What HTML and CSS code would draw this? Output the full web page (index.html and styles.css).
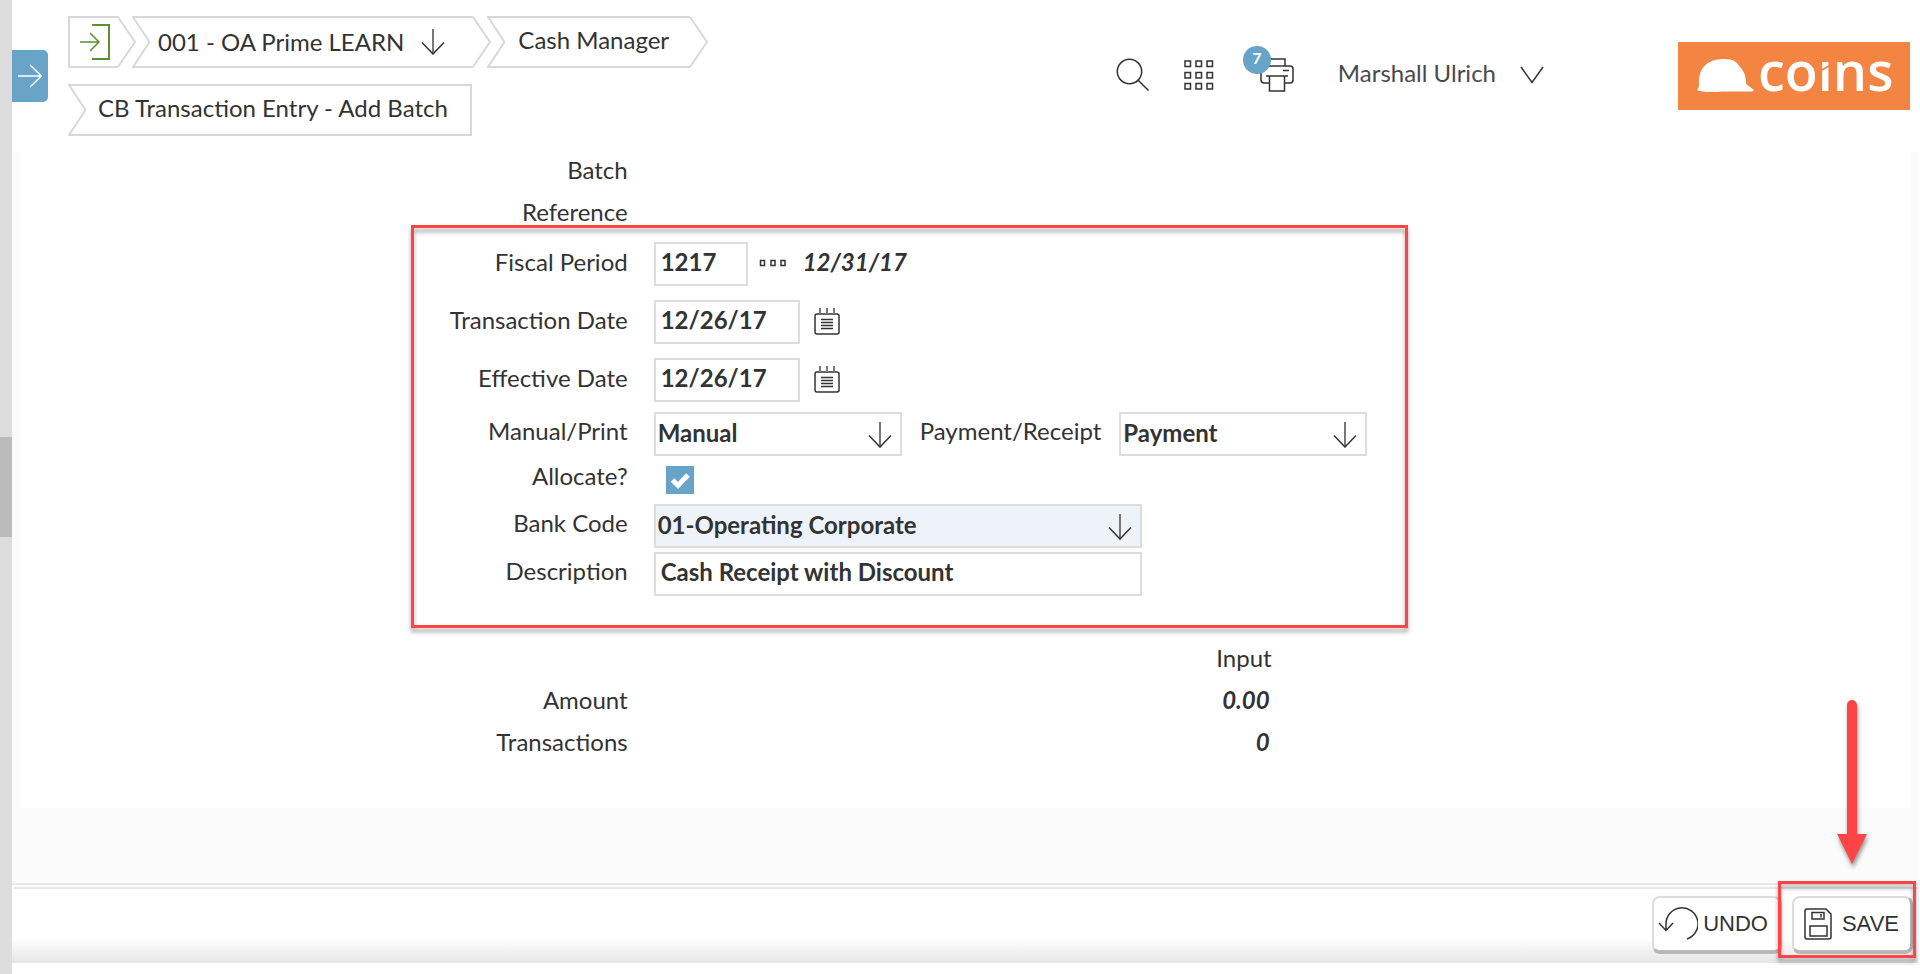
FILE: index.html
```html
<!DOCTYPE html>
<html lang="en">
<head>
<meta charset="utf-8">
<title>CB Transaction Entry - Add Batch</title>
<link rel="stylesheet" href="styles.css">
</head>
<body>
<svg class="symbols" aria-hidden="true">
  <symbol id="notch" viewBox="0 0 18 52"><path d="M18 1H1L17.500 26L1 51H18"/></symbol>
  <symbol id="point" viewBox="0 0 18 52"><path d="M0 1L17 26L0 51"/></symbol>
  <symbol id="arrow-down" viewBox="0 0 24 26"><path d="M12 0V25" stroke-width="2" stroke="#777"/><path d="M1 13.500L12 25L23 13.500"/></symbol>
  <symbol id="calendar" viewBox="0 0 26 28"><rect x="1" y="6" width="24" height="20" rx="2"/><path d="M6 0V6M13 0V6M20 0V6" stroke="#777" stroke-width="2"/><path d="M7 11.500H19M7 14.500H19M7 17.500H19M7 20.500H19"/></symbol>
</svg>
<div class="rail"><div class="rail-thumb"></div></div>
<div class="shell">
  <header class="header">
    <button class="side-tab" aria-label="Open menu"><svg width="24" height="24" viewBox="0 0 24 24"><path d="M0 12H23M12 1L23.500 12L12 23"/></svg></button>
    <nav class="crumbs" aria-label="Breadcrumb">
      <div class="crumb-row">
        <button class="crumb" aria-label="Exit">
          <span class="crumb-body crumb-exit"><svg width="30" height="36" viewBox="0 0 30 36"><path d="M12 1H29V35H12" stroke-width="2"/><path d="M0 18H19M10 9L19 18L10 27"/></svg></span>
          <svg class="crumb-end"><use href="#point"/></svg>
        </button>
        <button class="crumb">
          <svg class="crumb-end"><use href="#notch"/></svg>
          <span class="crumb-body crumb-company">001 - OA Prime LEARN <svg class="arrow"><use href="#arrow-down"/></svg></span>
          <svg class="crumb-end"><use href="#point"/></svg>
        </button>
        <button class="crumb">
          <svg class="crumb-end"><use href="#notch"/></svg>
          <span class="crumb-body crumb-module">Cash Manager</span>
          <svg class="crumb-end"><use href="#point"/></svg>
        </button>
      </div>
      <div class="crumb-row">
        <button class="crumb">
          <svg class="crumb-end"><use href="#notch"/></svg>
          <span class="crumb-body crumb-page">CB Transaction Entry - Add Batch</span>
        </button>
      </div>
    </nav>
    <div class="tools">
      <button class="tool" aria-label="Search"><svg width="34" height="34" viewBox="0 0 34 34"><circle cx="13.500" cy="13.500" r="12.200"/><path d="M22 22L32.500 32.500"/></svg></button>
      <button class="tool" aria-label="Apps"><svg width="30" height="30" viewBox="0 0 30 30"><path d="M1 1h5.500v5.500H1zM12 1h5.500v5.500H12zM23 1h5.500v5.500H23zM1 12.500h5.500V18H1zM12 12.500h5.500V18H12zM23 12.500h5.500V18H23zM1 23.500h5.500V29H1zM12 23.500h5.500V29H12zM23 23.500h5.500V29H23z"/></svg></button>
      <button class="tool tool-print" aria-label="Print queue"><svg width="34" height="34" viewBox="0 0 34 34"><path d="M9 8V1H25V8M9 25H4Q1 25 1 22V11Q1 8 4 8H30Q33 8 33 11V22Q33 25 30 25H25M6 18H28M23 12.500H29M9.500 18V33H24.500V18"/></svg><span class="badge">7</span></button>
      <button class="user"><span class="user-name">Marshall Ulrich</span><svg width="24" height="18" viewBox="0 0 24 18"><path d="M1 1L12 16.500L23 1"/></svg></button>
    </div>
    <a class="logo" href="#" aria-label="coins">
      <svg width="232" height="68" viewBox="0 0 232 68">
        <path class="helmet" d="M19 48Q21 46 21 43C20 25 30 17 46 17C56 17 59 20 62 25C66 29 68 34 68 42L76 48Q75 50 72 49.500H44Q26 51 19 48Z"/>
        <text x="80" y="49">coins</text>
        <path class="dot-cover" d="M141 2H156V18H141Z"/>
        <path class="slice" d="M144 28L156 21"/>
      </svg>
    </a>
  </header>
  <main class="content">
    <form class="panel" id="batch-form">
      <div class="sheet">
        <div class="plain-row"><span class="label">Batch</span></div>
        <div class="plain-row"><span class="label">Reference</span></div>
        <section class="fields">
          <div class="row spaced">
            <label class="label" for="period">Fiscal Period</label>
            <input class="field w-period" id="period" value="1217">
            <button type="button" class="icon-button lookup" aria-label="Look up period"><svg width="28" height="8" viewBox="0 0 28 8"><path d="M1.500 1.500h4v5h-4zM12 1.500h4v5h-4zM22 1.500h4v5h-4z"/></svg></button>
            <output class="value">12/31/17</output>
          </div>
          <div class="row spaced">
            <label class="label" for="tdate">Transaction Date</label>
            <input class="field w-date" id="tdate" value="12/26/17">
            <button type="button" class="icon-button" aria-label="Pick transaction date"><svg class="calendar"><use href="#calendar"/></svg></button>
          </div>
          <div class="row">
            <label class="label" for="edate">Effective Date</label>
            <input class="field w-date" id="edate" value="12/26/17">
            <button type="button" class="icon-button" aria-label="Pick effective date"><svg class="calendar"><use href="#calendar"/></svg></button>
          </div>
          <div class="row tight after-dates">
            <label class="label" for="mode">Manual/Print</label>
            <span class="select w-select"><select class="field" id="mode"><option>Manual</option></select><svg class="arrow"><use href="#arrow-down"/></svg></span>
            <label class="inline-label" for="kind">Payment/Receipt</label>
            <span class="select w-select"><select class="field" id="kind"><option>Payment</option></select><svg class="arrow"><use href="#arrow-down"/></svg></span>
          </div>
          <div class="row check-row">
            <label class="label" for="allocate">Allocate?</label>
            <span class="check"><input type="checkbox" id="allocate" checked><svg width="28" height="28" viewBox="0 0 28 28"><path d="M6.500 14L12 19.500L22 9"/></svg></span>
          </div>
          <div class="row tight">
            <label class="label" for="bank">Bank Code</label>
            <span class="select w-wide"><select class="field tinted" id="bank"><option>01-Operating Corporate</option></select><svg class="arrow"><use href="#arrow-down"/></svg></span>
          </div>
          <div class="row tight last">
            <label class="label" for="desc">Description</label>
            <input class="field w-wide" id="desc" value="Cash Receipt with Discount">
          </div>
        </section>
        <table class="totals">
          <tr><td></td><th scope="col">Input</th></tr>
          <tr><th scope="row">Amount</th><td>0.00</td></tr>
          <tr><th scope="row">Transactions</th><td>0</td></tr>
        </table>
      </div>
    </form>
  </main>
  <footer class="footer">
    <div class="actions">
      <button class="action undo" type="reset" form="batch-form"><svg width="40" height="34" viewBox="0 0 40 34"><path d="M8 23V17A16 16 0 1 1 29 32M1 16L8 23.500L15 16"/></svg>UNDO</button>
      <div class="save-spot">
        <button class="action save" type="submit" form="batch-form"><svg width="28" height="32" viewBox="0 0 28 32"><path d="M3 1H22L27 6V29Q27 31 25 31H3Q1 31 1 29V3Q1 1 3 1ZM8 4.500H20V11H8ZM17 6V9.500M6 18H23V28H6Z"/></svg>SAVE</button>
        <svg class="pointer" width="30" height="164" viewBox="0 0 30 164" aria-hidden="true"><path d="M10 5A5 5 0 0 1 20 5V134H30L15 164L0 134H10Z"/></svg>
      </div>
    </div>
  </footer>
</div>
</body>
</html>
```
FILE: styles.css
```css
* { box-sizing: border-box; }
body {
  margin: 0;
  min-height: 100vh;
  display: flex;
  background: #fff;
  color: #333;
  font: 24px/36px Lato, "Liberation Sans", sans-serif;
}
button, input, select { font: inherit; color: inherit; margin: 0; }
button { background: none; border: 0; padding: 0; cursor: pointer; }
svg { display: block; flex: none; fill: none; stroke: #333; stroke-width: 1.5; }
.symbols { position: absolute; width: 0; height: 0; }

.rail { width: 12px; background: #ddd; display: flex; flex-direction: column; justify-content: center; }
.rail-thumb { height: 100px; background: #bbb; }
.shell { flex: 1; min-width: 0; display: flex; flex-direction: column; padding: 0 2px 11px 0; }

.header { display: flex; align-items: flex-start; padding: 0 8px 16px 0; min-height: 152px; }
.side-tab {
  width: 36px; height: 52px; margin: 50px 20px 0 0;
  display: grid; place-items: center;
  background: #68a3c8; border-radius: 0 5px 5px 0;
}
.side-tab svg { stroke: #fff; }
.crumbs { flex: 1; display: flex; flex-direction: column; gap: 16px; padding-top: 16px; }
.crumb-row { display: flex; }
.crumb { display: flex; height: 52px; white-space: nowrap; }
.crumb + .crumb { margin-left: -4px; }
.crumb-end { width: 18px; height: 52px; stroke: #d8d8d8; stroke-width: 2; }
.crumb-body { display: flex; align-items: center; border: solid #d8d8d8; border-width: 2px 0; padding-bottom: 4px; }
.crumb-exit { border-left-width: 2px; padding: 0 8px 0 10px; }
.crumb-exit svg { stroke: #5b8f31; }
.crumb-company { gap: 17px; padding: 0 28px 0 8px; }
.crumb-module { padding-left: 13px; padding-right: 21px; }
.crumb-page { border-right-width: 2px; padding-left: 12px; padding-right: 22px; }
.arrow { width: 24px; height: 26px; }

.tools { display: flex; align-items: center; padding-top: 58px; }
.tool { margin-right: 34px; }
.tool-print { position: relative; margin: 0 44px 0 12px; }
.badge {
  position: absolute; left: -17px; top: -12px;
  width: 28px; height: 28px; border-radius: 50%;
  background: #68a3c8; color: #fff; font-size: 16px; line-height: 24px; font-weight: bold;
}
.user { display: flex; align-items: center; gap: 24px; line-height: 30px; color: #4a4a4a; white-space: nowrap; }
.user-name { padding-bottom: 4px; }
.logo { margin: 42px 0 0 134px; background: #f38441; }
.logo svg { overflow: visible; stroke: none; }
.logo text { font: 600 54px "Open Sans", sans-serif; fill: #fff; }
.helmet { fill: #fff; }
.dot-cover { fill: #f38441; }
.slice { stroke: #f38441; stroke-width: 2; }

.content { flex: 1; background: #fbfbfb; padding: 0 8px 75px; }
.panel { background: #fff; display: grid; grid-template-columns: 7fr 997px 9fr; padding-bottom: 41px; }
.sheet { grid-column: 2; }
.label { width: 217px; text-align: right; margin-right: 26px; flex: none; }
.plain-row { display: flex; height: 42px; }
.fields { position: relative; padding: 6px 0 32px; }
.fields::after, .save-spot::after {
  content: ""; position: absolute; pointer-events: none;
  border: 3px solid #fe4444;
  filter: drop-shadow(0 4px 2px rgba(0, 0, 0, .35));
}
.fields::after { inset: -11px 0 0; }
.row { display: flex; line-height: 40px; }
.tight { line-height: 38px; }
.spaced { margin-bottom: 14px; }
.after-dates { margin-top: 10px; }
.check-row { height: 48px; }
.last { margin-top: 4px; }
.field {
  height: 44px; border: 2px solid #ddd; border-radius: 0; background: #fff;
  padding: 0 5px 6px; font-weight: bold; outline: 0;
}
select.field { appearance: none; width: 100%; padding: 0 40px 6px 2px; }
select.tinted { background: #eef3fa; }
.w-period { width: 94px; }
.w-date { width: 146px; }
.w-select { width: 248px; }
.w-wide { width: 488px; }
.select { position: relative; display: block; height: 44px; }
.select .arrow { position: absolute; right: 10px; top: 10px; pointer-events: none; }
.icon-button { height: 44px; margin-left: 14px; display: grid; place-items: center; }
.lookup { margin-left: 11px; margin-right: 16px; height: 42px; }
.calendar { width: 26px; height: 28px; }
.value { font-weight: bold; font-style: italic; }
.inline-label { margin: 0 18px; }
.check { position: relative; margin: 10px 0 0 12px; width: 28px; height: 28px; }
.check input { appearance: none; display: block; width: 28px; height: 28px; background: #68a3c8; }
.check svg { position: absolute; inset: 0; stroke: #fff; stroke-width: 5; pointer-events: none; }

.totals { width: 861px; margin-top: 13px; border-collapse: collapse; line-height: 34px; }
.totals tr { height: 42px; vertical-align: top; }
.totals th { font-weight: normal; text-align: right; padding: 0; }
.totals th[scope="row"] { width: 217px; }
.totals td { padding: 0 2px 0 0; text-align: right; font-weight: bold; font-style: italic; }

.footer { border-top: 2px solid #e8e8e8; padding-top: 4px; height: 80px; background: linear-gradient(#fff 54px, #e5e5e5); }
.actions { display: flex; justify-content: flex-end; gap: 10px; border-top: 2px solid #e8e8e8; margin: -2px 0 0 2px; padding: 7px 5px 0 0; }
.action {
  height: 58px; display: flex; align-items: center;
  font: 22px/28px "Liberation Sans", Arial, sans-serif;
  background: #fff; border: 2px solid #ddd; border-width: 2px 3px 4px 2px;
  border-right-color: #b8b8b8; border-bottom-color: #b8b8b8; border-radius: 8px;
}
.undo { padding: 0 11px 0 4px; gap: 5px; }
.save { padding: 0 11px 0 10px; gap: 10px; }
.save-spot { position: relative; }
.save-spot::after { inset: -15px -3px -4px -14px; }
.pointer { position: absolute; right: 46px; bottom: 90px; fill: #fe4444; stroke: none; filter: drop-shadow(1px 4px 2px rgba(0, 0, 0, .4)); pointer-events: none; }
```
